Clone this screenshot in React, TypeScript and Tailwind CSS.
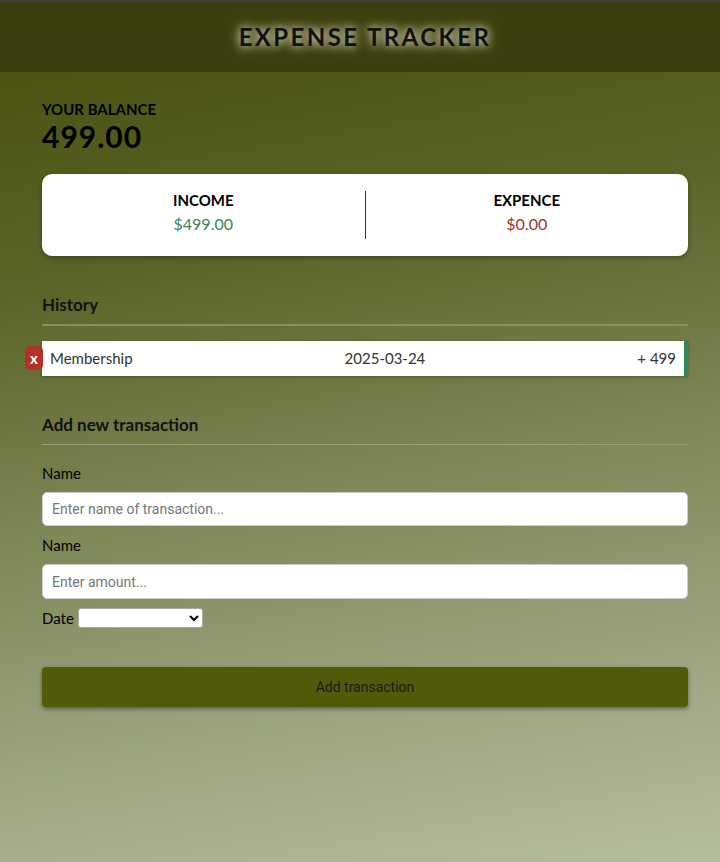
export default function App(): JSX.Element {
  return (
    <div className="min-h-[862px] w-full bg-[linear-gradient(170deg,#474e0c_0%,#5b6428_30%,#7e8756_55%,#9ea683_80%,#b5bd9f_100%)] font-['Lato','Liberation_Sans',sans-serif] text-black">
      <header className="flex h-[72px] items-center justify-center border-t-2 border-[#3e3e3e] bg-[#3c3d0d] pl-[10px]">
        <h1 className="text-[24px] font-bold tracking-[2.4px] text-[#111] [text-shadow:0_0_8px_#dcdcc0,0_0_14px_#b8ba90]">
          EXPENSE TRACKER
        </h1>
      </header>

      <main className="ml-[42px] mr-[32px] pt-[28px]">
        <h4 className="text-[15px] font-bold leading-[18px]">YOUR BALANCE</h4>
        <h2 className="text-[30px] font-bold leading-[36px] tracking-[1px]">499.00</h2>

        <div className="mt-[20px] flex h-[82px] items-start rounded-[10px] bg-white pt-[15px] shadow-[0_2px_5px_rgba(0,0,0,0.3)]">
          <div className="flex flex-1 flex-col items-center">
            <h4 className="text-[15px] font-bold leading-[22px]">INCOME</h4>
            <p className="text-[16px] leading-[25px] text-[#3b8458]">$499.00</p>
          </div>
          <div className="mt-[2px] h-[48px] w-px bg-[#6b1b1b]" />
          <div className="flex flex-1 flex-col items-center">
            <h4 className="text-[15px] font-bold leading-[22px]">EXPENCE</h4>
            <p className="text-[16px] leading-[25px] text-[#93382f]">$0.00</p>
          </div>
        </div>

        <h3 className="mt-[38px] border-b-2 border-[#8a9164] pb-[8px] text-[17px] font-bold leading-[22px] text-[#111]">
          History
        </h3>
        <ul className="mt-[15px]">
          <li className="relative flex h-[35px] items-center justify-between border-r-4 border-[#2e8b57] bg-white px-[8px] text-[15px] text-[#333] shadow-[0_1px_3px_rgba(0,0,0,0.3)]">
            <button className="absolute left-[-17px] top-[5px] flex h-[24px] w-[18px] items-center justify-center rounded-[5px] bg-[#b3302b] text-[15px] font-bold text-white">
              x
            </button>
            <span>Membership</span>
            <span>2025-03-24</span>
            <span>+ 499</span>
          </li>
        </ul>

        <h3 className="mt-[38px] border-b border-[#9aa07a] pb-[8px] text-[17px] font-bold leading-[22px] text-[#111]">
          Add new transaction
        </h3>
        <form className="pt-[17px]">
          <label className="block text-[15px] leading-[22px]">Name</label>
          <input
            type="text"
            placeholder="Enter name of transaction..."
            className="mt-[8px] block h-[34px] w-full rounded-[5px] border border-[#ccc] bg-white px-[9px] font-['Roboto',sans-serif] text-[14px] placeholder:text-[#777] focus:outline-none"
          />
          <label className="mt-[8px] block text-[15px] leading-[22px]">Name</label>
          <input
            type="text"
            placeholder="Enter amount..."
            className="mt-[8px] block h-[35px] w-full rounded-[5px] border border-[#ccc] bg-white px-[9px] font-['Roboto',sans-serif] text-[14px] placeholder:text-[#777] focus:outline-none"
          />
          <div className="mt-[8px] flex items-center gap-[4px]">
            <label className="text-[15px] leading-[22px]">Date</label>
            <select className="h-[20px] w-[125px] rounded-[3px] border border-[#aaa] bg-white text-[13px]">
              <option></option>
            </select>
          </div>
          <button
            type="button"
            className="mt-[38px] h-[40px] w-full rounded-[4px] bg-[#525b09] font-['Roboto',sans-serif] text-[14px] text-[#1a1a1a] shadow-[0_2px_4px_rgba(0,0,0,0.4)]"
          >
            Add transaction
          </button>
        </form>
      </main>
    </div>
  );
}
